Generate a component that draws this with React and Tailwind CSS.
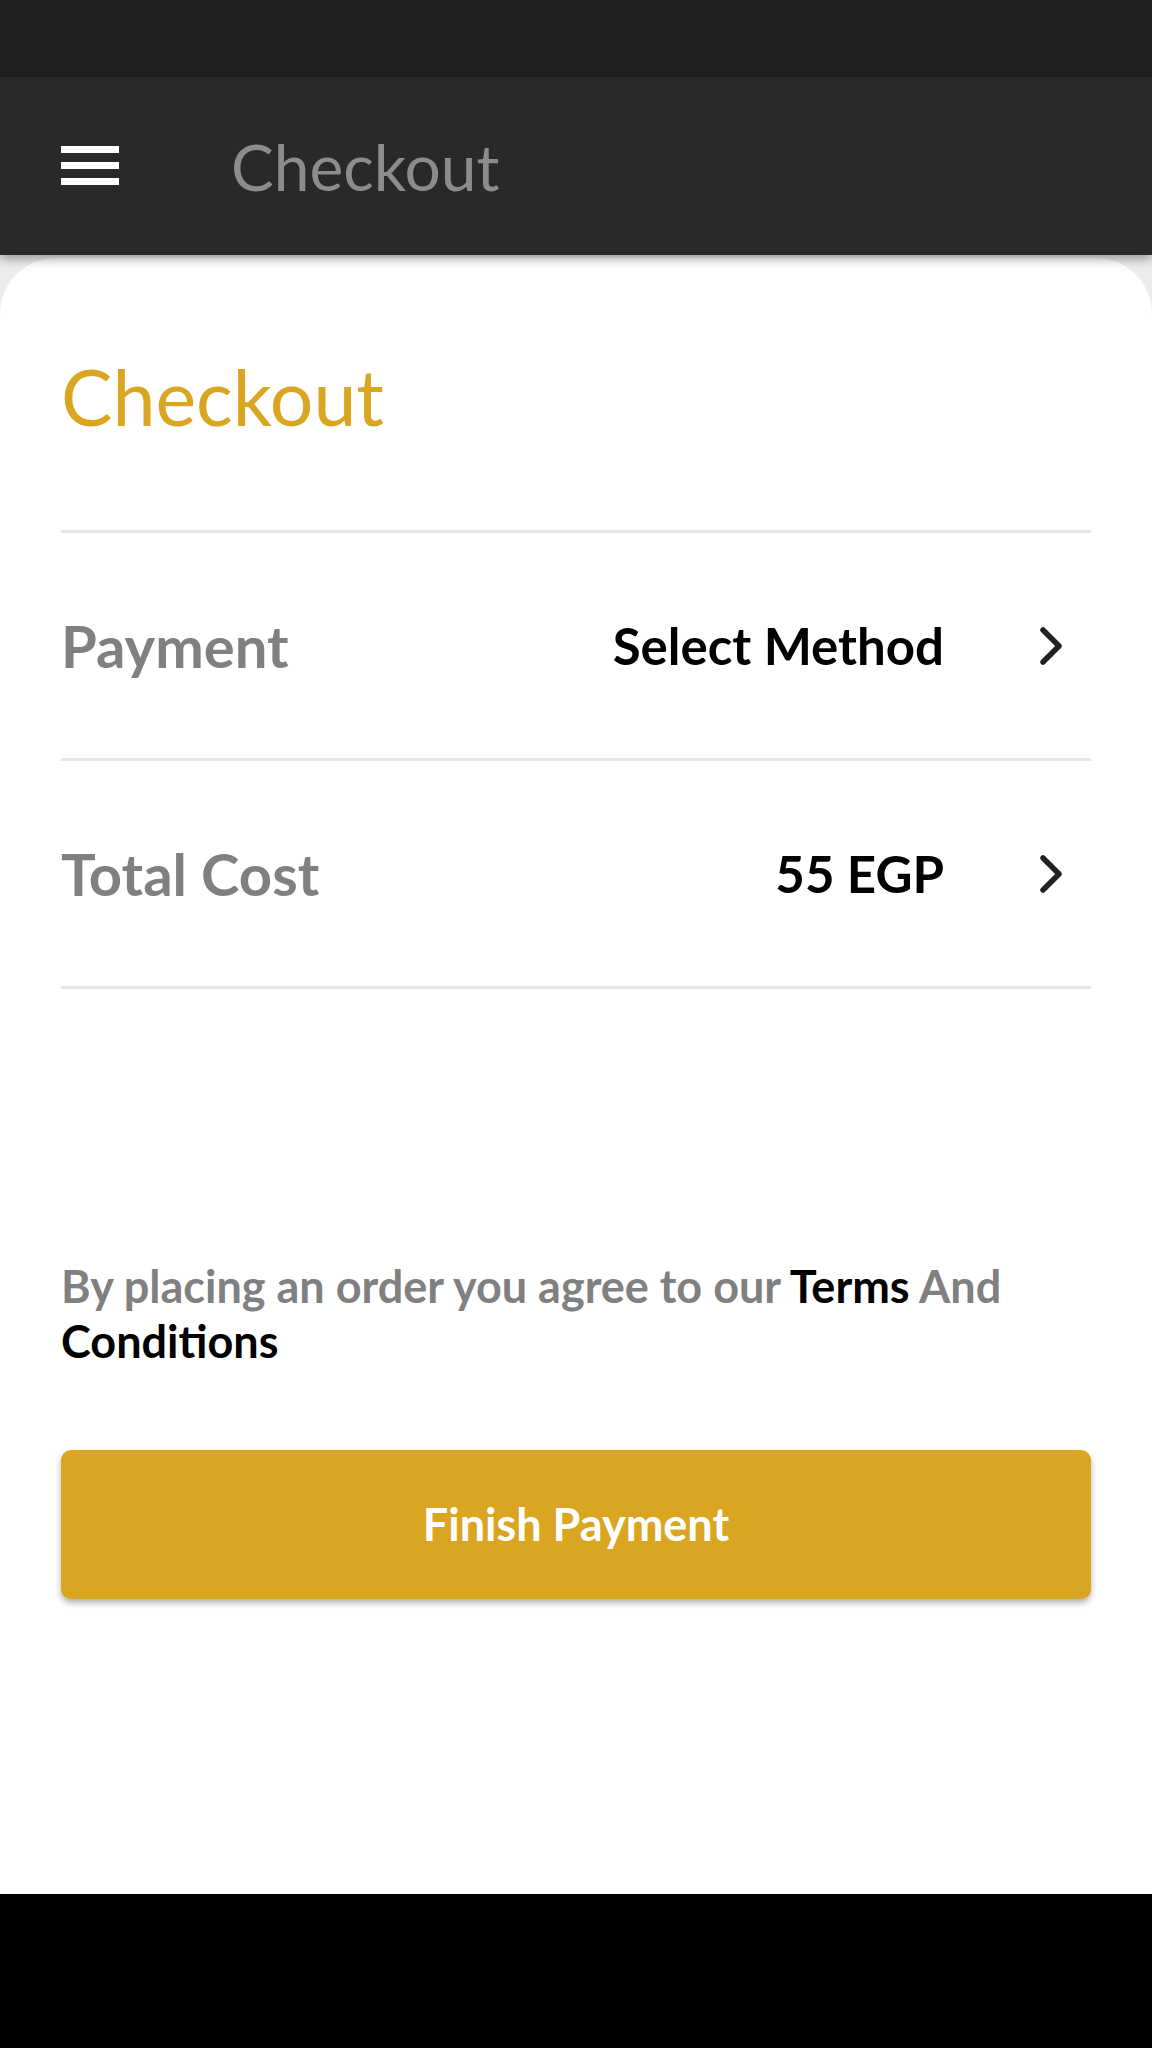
export default function App() {
  return (
    <div className="w-full h-[2048px] flex flex-col bg-white" style={{ fontFamily: "Lato, 'Noto Sans', sans-serif" }}>
      <div className="h-[77px] bg-[#202020] shrink-0" />
      <div className="h-[178px] bg-[#292929] shrink-0 flex items-center relative z-10 shadow-[0_4px_10px_rgba(0,0,0,0.35)]">
        <div className="pl-[61px] w-[173px]">
          <svg width="58" height="40" viewBox="0 0 58 40">
            <rect x="0" y="0" width="58" height="7" fill="#ffffff" />
            <rect x="0" y="16" width="58" height="7" fill="#ffffff" />
            <rect x="0" y="32" width="58" height="7" fill="#ffffff" />
          </svg>
        </div>
        <div className="ml-[58px] text-[64px] leading-none text-[#8c8c8c] pt-[2px]">Checkout</div>
      </div>
      <div className="flex-1 bg-[#ececec] flex flex-col">
        <div className="flex-1 bg-white rounded-t-[56px] mt-[3px] px-[61px] pt-[92px] flex flex-col">
          <div className="text-[77px] leading-[1.2] text-[#DAA520]">Checkout</div>
          <div className="h-[3px] bg-[#e6e6e6] mt-[88px]" />
          <div className="h-[225px] flex items-center">
            <div className="flex-1 text-[58px] font-bold text-[#808080]">Payment</div>
            <div className="text-[51px] font-bold text-black">Select Method</div>
            <Chevron />
          </div>
          <div className="h-[3px] bg-[#e6e6e6]" />
          <div className="h-[225px] flex items-center">
            <div className="flex-1 text-[58px] font-bold text-[#808080]">Total Cost</div>
            <div className="text-[51px] font-bold text-black">55 EGP</div>
            <Chevron />
          </div>
          <div className="h-[3px] bg-[#e6e6e6]" />
          <div className="mt-[270px] text-[45px] leading-[55px] font-bold text-[#808080]">
            By placing an order you agree to our <span className="text-black">Terms</span> And <span className="text-black">Conditions</span>
          </div>
          <button className="mt-[81px] h-[149px] w-full rounded-[10px] bg-[#DAA520] text-white text-[45px] font-bold shadow-[0_4px_6px_rgba(0,0,0,0.3)]">
            Finish Payment
          </button>
        </div>
      </div>
      <div className="h-[154px] bg-black shrink-0" />
    </div>
  );
}

function Chevron() {
  return (
    <div className="w-[147px] flex justify-end pr-[24px]">
      <svg width="30" height="40" viewBox="0 0 30 40">
        <polyline points="6,4 22,20 6,36" fill="none" stroke="#222222" strokeWidth="5.5" strokeLinecap="round" strokeLinejoin="round" />
      </svg>
    </div>
  );
}
